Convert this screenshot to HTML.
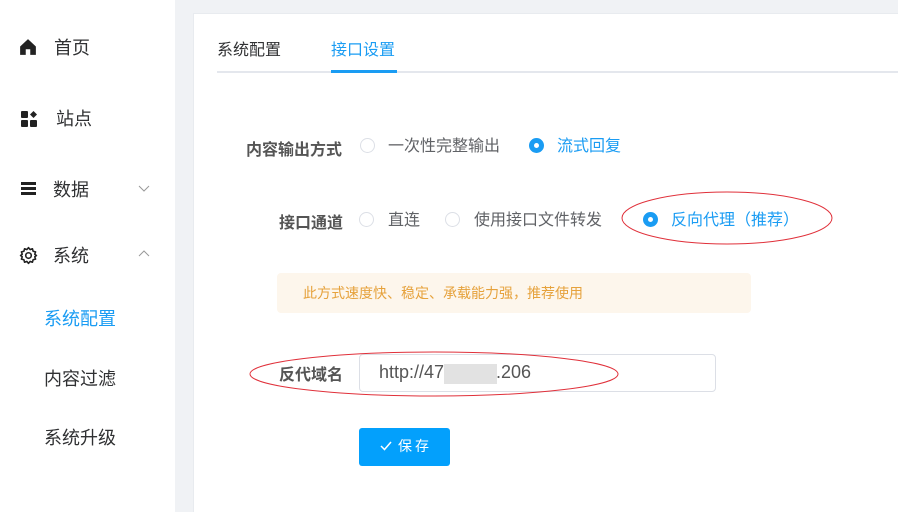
<!DOCTYPE html>
<html><head><meta charset="utf-8"><style>
*{margin:0;padding:0;box-sizing:border-box}
html,body{width:898px;height:512px;overflow:hidden}
body{background:#f0f2f5;font-family:"Liberation Sans","Noto Sans CJK SC",sans-serif;position:relative;color:#303133}
.a{position:absolute;white-space:nowrap}
#side{left:0;top:0;width:175px;height:512px;background:#fff}
#card{left:193px;top:13px;width:720px;height:510px;background:#fff;border:1px solid #e8ebef}
.m{font-size:18px;color:#303133}
.r{width:15px;height:15px;border:1px solid #dcdfe6;border-radius:50%;background:#fff}
.rs{width:15px;height:15px;border-radius:50%;background:#1a9cf3}
.rs::after{content:"";position:absolute;left:5px;top:5px;width:5px;height:5px;border-radius:50%;background:#fff}
.t{font-size:16px;color:#606266}
.lb{font-size:16px;font-weight:bold;color:#555}
</style></head><body>
<div class="a" id="side"></div>
<svg class="a" style="left:19px;top:38px" width="18" height="18" viewBox="0 0 16 16"><path d="M8 1L1 7.5V15h5v-5h4v5h5V7.5z" fill="#222"/></svg>
<div class="a m" style="left:54px;top:34px">首页</div>
<svg class="a" style="left:21px;top:111px" width="17" height="16" viewBox="0 0 17 16"><rect x="0" y="0" width="7" height="7" rx="1" fill="#222"/><rect x="0" y="9" width="7" height="7" rx="1" fill="#222"/><rect x="9" y="9" width="7" height="7" rx="1" fill="#222"/><path d="M12.5 0L16 3.5 12.5 7 9 3.5z" fill="#222"/></svg>
<div class="a m" style="left:56px;top:105px">站点</div>
<svg class="a" style="left:21px;top:182px" width="15" height="13" viewBox="0 0 15 13"><rect y="0" width="15" height="3" fill="#222"/><rect y="5" width="15" height="3" fill="#222"/><rect y="10" width="15" height="3" fill="#222"/></svg>
<div class="a m" style="left:53px;top:176px">数据</div>
<svg class="a" style="left:138px;top:185px" width="12" height="7"><path d="M1 1l5 5 5-5" stroke="#999" fill="none"/></svg>
<svg class="a" style="left:19px;top:246px" width="19" height="19" viewBox="0 0 24 24"><circle cx="12" cy="12" r="3.5" fill="none" stroke="#222" stroke-width="2"/><path d="M12 2l2 2.5 3-1 .8 3.1 3.1.8-1 3 2.1 1.6-2.1 1.6 1 3-3.1.8-.8 3.1-3-1L12 22l-2-2.5-3 1-.8-3.1-3.1-.8 1-3L2 12l2.1-1.6-1-3 3.1-.8.8-3.1 3 1z" fill="none" stroke="#222" stroke-width="2" stroke-linejoin="round"/></svg>
<div class="a m" style="left:53px;top:242px">系统</div>
<svg class="a" style="left:138px;top:250px" width="12" height="7"><path d="M1 6l5-5 5 5" stroke="#999" fill="none"/></svg>
<div class="a m" style="left:44px;top:305px;color:#1a9cf3">系统配置</div>
<div class="a m" style="left:44px;top:365px">内容过滤</div>
<div class="a m" style="left:44px;top:424px">系统升级</div>

<div class="a" id="card"></div>
<div class="a" style="left:217px;top:71px;width:690px;height:2px;background:#e4e7ed"></div>
<div class="a" style="left:331px;top:70px;width:66px;height:3px;background:#1a9cf3"></div>
<div class="a" style="left:217px;top:36px;font-size:16px;color:#303133">系统配置</div>
<div class="a" style="left:331px;top:36px;font-size:16px;color:#1a9cf3">接口设置</div>

<div class="a lb" style="left:246px;top:136px">内容输出方式</div>
<div class="a r" style="left:360px;top:138px"></div>
<div class="a t" style="left:388px;top:132px">一次性完整输出</div>
<div class="a rs" style="left:529px;top:138px"></div>
<div class="a t" style="left:557px;top:132px;color:#1a9cf3">流式回复</div>

<div class="a lb" style="left:279px;top:209px">接口通道</div>
<div class="a r" style="left:359px;top:212px"></div>
<div class="a t" style="left:388px;top:206px">直连</div>
<div class="a r" style="left:445px;top:212px"></div>
<div class="a t" style="left:474px;top:206px">使用接口文件转发</div>
<div class="a rs" style="left:643px;top:212px"></div>
<div class="a t" style="left:671px;top:206px;color:#1a9cf3">反向代理（推荐）</div>
<svg class="a" style="left:620px;top:190px" width="214" height="56"><ellipse cx="107" cy="28" rx="105" ry="26" fill="none" stroke="#e0303a" stroke-width="1"/></svg>

<div class="a" style="left:277px;top:273px;width:474px;height:40px;background:#fdf6ec;border-radius:4px"></div>
<div class="a" style="left:303px;top:283px;font-size:14px;color:#e6a23c">此方式速度快、稳定、承载能力强，推荐使用</div>

<div class="a lb" style="left:279px;top:361px">反代域名</div>
<div class="a" style="left:359px;top:354px;width:357px;height:38px;border:1px solid #dcdfe6;border-radius:4px;background:#fff"></div>
<div class="a" style="left:379px;top:362px;font-size:18px;color:#555">http://47</div>
<div class="a" style="left:444px;top:364px;width:53px;height:20px;background:#e2e2e2"></div>
<div class="a" style="left:496px;top:362px;font-size:18px;color:#555">.206</div>
<svg class="a" style="left:248px;top:350px" width="374" height="48"><ellipse cx="186" cy="24" rx="184" ry="22" fill="none" stroke="#e0303a" stroke-width="1"/></svg>

<div class="a" style="left:359px;top:428px;width:91px;height:38px;background:#03a0fc;border-radius:3px"></div>
<svg class="a" style="left:380px;top:441px" width="12" height="10"><path d="M1 5l3.5 3.5L11 1" stroke="#fff" stroke-width="1.5" fill="none"/></svg>
<div class="a" style="left:398px;top:436px;font-size:14px;color:#fff;letter-spacing:3px">保存</div>
</body></html>
